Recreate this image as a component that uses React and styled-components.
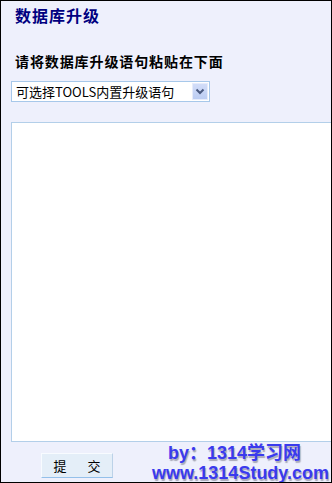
import React from "react";
import styled, { createGlobalStyle } from "styled-components";

const GlobalStyle = createGlobalStyle`
  html, body {
    margin: 0;
    padding: 0;
    background: #eef0fc;
  }
  * {
    box-sizing: border-box;
  }
`;

const Page = styled.div`
  position: relative;
  width: 332px;
  height: 483px;
  border: 1px solid #000;
  background: #eef0fc;
  overflow: hidden;
  display: flex;
  flex-direction: column;
  padding: 4px 0 0 10px;
  font-family: "Noto Sans CJK SC", "Liberation Sans", sans-serif;
`;

const Title = styled.h1`
  margin: 0 0 0 4px;
  font-size: 16px;
  line-height: 20px;
  font-weight: bold;
  color: #000080;
  letter-spacing: 1px;
`;

const Subtitle = styled.h2`
  margin: 27px 0 0 4px;
  font-size: 14px;
  line-height: 18px;
  font-weight: bold;
  color: #000;
  letter-spacing: 0.9px;
`;

const SelectBox = styled.div`
  margin-top: 11px;
  width: 199px;
  height: 21px;
  border: 1px solid #a7c8ea;
  background: #fff;
  display: flex;
  align-items: center;
  justify-content: space-between;
  padding: 0 1px 0 4px;
  font-size: 13px;
  color: #000;
`;

const SelectLabel = styled.span`
  line-height: 19px;
  white-space: nowrap;
`;

const ArrowButton = styled.span`
  width: 16px;
  height: 17px;
  display: flex;
  align-items: center;
  justify-content: center;
  background: linear-gradient(#d2ddf8, #bccdf3);
  border: 1px solid #e6ecfb;
`;

const Editor = styled.textarea`
  margin-top: 20px;
  width: 340px;
  height: 320px;
  border: 1px solid #b3cfe9;
  background: #fff;
  resize: none;
  outline: none;
  padding: 2px;
  flex-shrink: 0;
`;

const Footer = styled.div`
  margin-top: 11px;
  padding-left: 30px;
`;

const SubmitButton = styled.button`
  width: 72px;
  height: 25px;
  border: 1px solid;
  border-color: #f8fbff #bcd2e8 #94c0ea #f8fbff;
  background: #e4eef8;
  display: flex;
  align-items: center;
  justify-content: center;
  gap: 21px;
  padding: 0;
  font-family: "Noto Sans CJK SC", sans-serif;
  font-size: 13px;
  color: #000;
`;

const Watermark = styled.div`
  position: absolute;
  left: 151px;
  top: 442px;
  width: 180px;
  display: flex;
  flex-direction: column;
  font-family: "Liberation Sans", "Noto Sans CJK SC", sans-serif;
  font-weight: bold;
  font-size: 18px;
  line-height: 20px;
  color: #3a3aee;
  text-shadow: 1px 2px 1px #a8a8b8;
`;

const WatermarkLine = styled.span`
  padding-left: ${(props) => props.indent || 0}px;
  white-space: nowrap;
`;

const ChevronIcon = () => (
  <svg width="10" height="7" viewBox="0 0 10 7">
    <path d="M1.5 1.5 L5 5 L8.5 1.5" fill="none" stroke="#4a5a80" strokeWidth="2" />
  </svg>
);

const App = () => {
  return (
    <>
      <GlobalStyle />
      <Page>
        <Title>数据库升级</Title>
        <Subtitle>请将数据库升级语句粘贴在下面</Subtitle>
        <SelectBox>
          <SelectLabel>可选择TOOLS内置升级语句</SelectLabel>
          <ArrowButton>
            <ChevronIcon />
          </ArrowButton>
        </SelectBox>
        <Editor />
        <Footer>
          <SubmitButton>
            <span>提</span>
            <span>交</span>
          </SubmitButton>
        </Footer>
        <Watermark>
          <WatermarkLine indent={16}>by：1314学习网</WatermarkLine>
          <WatermarkLine>www.1314Study.com</WatermarkLine>
        </Watermark>
      </Page>
    </>
  );
};

export default App;
